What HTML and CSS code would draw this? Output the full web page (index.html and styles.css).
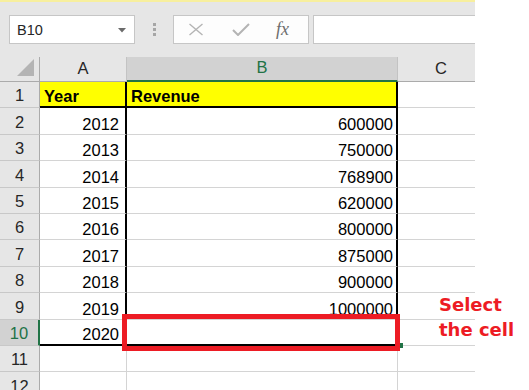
FILE: index.html
```html
<!DOCTYPE html>
<html>
  <head>
    <title>Select the cell</title>
    <link rel="stylesheet" href="styles.css">
  </head>
  <body>
    <div class="excel">
      <div class="ribbon-edge"></div>
      <div class="formula-bar">
        <div class="name-box">
          <span>B10</span>
          <svg class="drop" width="8" height="5" viewBox="0 0 8 5"><path d="M0 0h8L4 4.5z" fill="#6b6b6b"/></svg>
        </div>
        <div class="grip"><i></i><i></i><i></i></div>
        <div class="fx-buttons">
          <svg width="16" height="13" viewBox="0 0 16 13"><path d="M1.5 1l13 11M14.5 1l-13 11" stroke="#b4b4b4" stroke-width="1.4" fill="none"/></svg>
          <svg width="18" height="13" viewBox="0 0 18 13"><path d="M1 7l5 5L17 1" stroke="#b4b4b4" stroke-width="2" fill="none"/></svg>
          <span class="fx">fx</span>
        </div>
        <div class="formula-input"></div>
      </div>

      <div class="sheet">
        <div class="corner">
          <svg width="18" height="18" viewBox="0 0 18 18"><path d="M17 0v17H0z" fill="#b4b4b4"/></svg>
        </div>
        <div class="col-head">A</div>
        <div class="col-head active">B</div>
        <div class="col-head">C</div>

        <div class="row-head">1</div>
        <div class="cell label col-a top">Year</div>
        <div class="cell label col-b top">Revenue</div>
        <div class="cell"></div>

        <div class="row-head">2</div>
        <div class="cell col-a">2012</div>
        <div class="cell col-b">600000</div>
        <div class="cell"></div>

        <div class="row-head">3</div>
        <div class="cell col-a">2013</div>
        <div class="cell col-b">750000</div>
        <div class="cell"></div>

        <div class="row-head">4</div>
        <div class="cell col-a">2014</div>
        <div class="cell col-b">768900</div>
        <div class="cell"></div>

        <div class="row-head">5</div>
        <div class="cell col-a">2015</div>
        <div class="cell col-b">620000</div>
        <div class="cell"></div>

        <div class="row-head">6</div>
        <div class="cell col-a">2016</div>
        <div class="cell col-b">800000</div>
        <div class="cell"></div>

        <div class="row-head">7</div>
        <div class="cell col-a">2017</div>
        <div class="cell col-b">875000</div>
        <div class="cell"></div>

        <div class="row-head">8</div>
        <div class="cell col-a">2018</div>
        <div class="cell col-b">900000</div>
        <div class="cell"></div>

        <div class="row-head">9</div>
        <div class="cell col-a">2019</div>
        <div class="cell col-b">1000000</div>
        <div class="cell"></div>

        <div class="row-head active">10</div>
        <div class="cell col-a bottom">2020</div>
        <div class="cell col-b bottom"></div>
        <div class="cell"></div>

        <div class="row-head">11</div>
        <div class="cell"></div>
        <div class="cell"></div>
        <div class="cell"></div>

        <div class="row-head">12</div>
        <div class="cell"></div>
        <div class="cell"></div>
        <div class="cell"></div>
      </div>
    </div>

    <!-- annotation drawn over the sheet -->
    <div class="fill-handle"></div>
    <div class="selection-mark"></div>
    <p class="note">Select<br>the cell</p>
  </body>
</html>
```

FILE: styles.css
```css
html, body {
  margin: 0;
  height: 390px;
  overflow: hidden;
  background-color: #fff;
}
body {
  position: relative;
  font-family: "Liberation Sans", Arial, sans-serif;
}
.excel {
  width: 475px;
  overflow: hidden;
}
.ribbon-edge {
  height: 2px;
  background-color: #f7ef9e;
}
.formula-bar {
  display: flex;
  align-items: flex-start;
  height: 55px;
  padding: 13px 0 0 9px;
  box-sizing: border-box;
  background-color: #e6e6e6;
}
.name-box {
  display: flex;
  align-items: center;
  justify-content: space-between;
  width: 126px;
  height: 29px;
  padding: 0 8px 0 7px;
  box-sizing: border-box;
  border: 1px solid #c6c6c6;
  background-color: #fff;
  font-size: 14.5px;
  color: #262626;
}
.name-box .drop {
  margin-top: 1px;
}
.grip {
  display: flex;
  flex-direction: column;
  gap: 2px;
  margin: 8px 17px 0 18px;
}
.grip i {
  width: 3px;
  height: 3px;
  background-color: #a6a6a6;
}
.fx-buttons {
  display: flex;
  align-items: center;
  width: 136px;
  height: 29px;
  padding-left: 14px;
  gap: 28px;
  box-sizing: border-box;
  border: 1px solid #c6c6c6;
  background-color: #fdfdfd;
}
.fx {
  margin-left: -2px;
  font-family: "Liberation Serif", "Times New Roman", serif;
  font-style: italic;
  font-size: 18px;
  color: #6d6d6d;
}
.formula-input {
  flex: 1;
  height: 29px;
  margin-left: 4px;
  box-sizing: border-box;
  border: 1px solid #c6c6c6;
  border-right: none;
  background-color: #fff;
}
.sheet {
  display: grid;
  grid-template-columns: 40px 87px 271px 87px;
  grid-template-rows: 25px repeat(12, 26.4px);
  height: 333px;
  overflow: hidden;
  font-size: 16.5px;
}
.corner {
  display: flex;
  align-items: flex-end;
  justify-content: flex-end;
  padding: 0 4px 4px 0;
  border-right: 1px solid #ababab;
  border-bottom: 1px solid #ababab;
  background-color: #e6e6e6;
}
.col-head {
  display: flex;
  align-items: flex-end;
  justify-content: center;
  padding-bottom: 3px;
  border-right: 1px solid #c3c3c3;
  border-bottom: 1px solid #ababab;
  background-color: #e6e6e6;
  color: #262626;
}
.col-head.active {
  border-bottom: 2px solid #217346;
  background-color: #d2d2d2;
  color: #217346;
}
.row-head {
  display: flex;
  align-items: flex-end;
  justify-content: center;
  padding-bottom: 2px;
  border-right: 1px solid #ababab;
  border-bottom: 1px solid #c8c8c8;
  background-color: #e6e6e6;
  color: #262626;
}
.row-head.active {
  border-right: 2px solid #217346;
  background-color: #d2d2d2;
  color: #217346;
}
.cell {
  display: flex;
  align-items: flex-end;
  justify-content: flex-end;
  padding: 0 3px 1px 4px;
  line-height: 17px;
  border-right: 1px solid #d4d4d4;
  border-bottom: 1px solid #d4d4d4;
  color: #000;
}
.cell.col-a {
  padding-right: 6px;
  border-right: 2px solid #000;
}
.cell.col-b {
  border-right: 2px solid #000;
}
.cell.label {
  justify-content: flex-start;
  font-weight: bold;
  background-color: #ffff00;
}
.cell.top,
.cell.bottom {
  border-bottom: 2px solid #000;
}
.selection-mark {
  position: absolute;
  left: 122px;
  top: 314px;
  width: 278px;
  height: 37px;
  box-sizing: border-box;
  border: 5px solid #ed1c24;
}
.fill-handle {
  position: absolute;
  left: 399px;
  top: 343px;
  width: 4px;
  height: 5px;
  background-color: #217346;
}
.note {
  position: absolute;
  left: 439px;
  top: 292px;
  margin: 0;
  font-family: "DejaVu Sans", Verdana, sans-serif;
  font-weight: bold;
  font-size: 18px;
  line-height: 25px;
  color: #ed1c24;
}
```
